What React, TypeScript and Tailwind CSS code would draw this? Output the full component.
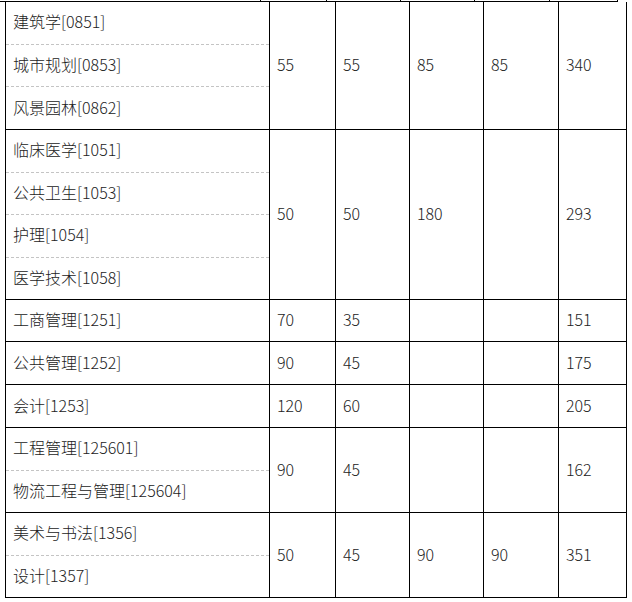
import React from "react";

type Group = {
  h: string;
  names: string[];
  vals: string[];
};

const groups: Group[] = [
  { h: "h-[128px]", names: ["建筑学[0851]", "城市规划[0853]", "风景园林[0862]"], vals: ["55", "55", "85", "85", "340"] },
  { h: "h-[170px]", names: ["临床医学[1051]", "公共卫生[1053]", "护理[1054]", "医学技术[1058]"], vals: ["50", "50", "180", "", "293"] },
  { h: "h-[42px]", names: ["工商管理[1251]"], vals: ["70", "35", "", "", "151"] },
  { h: "h-[43px]", names: ["公共管理[1252]"], vals: ["90", "45", "", "", "175"] },
  { h: "h-[43px]", names: ["会计[1253]"], vals: ["120", "60", "", "", "205"] },
  { h: "h-[85px]", names: ["工程管理[125601]", "物流工程与管理[125604]"], vals: ["90", "45", "", "", "162"] },
  { h: "h-[85px]", names: ["美术与书法[1356]", "设计[1357]"], vals: ["50", "45", "90", "90", "351"] },
];

const valWidths = ["w-[66px]", "w-[74px]", "w-[74px]", "w-[75px]", "w-[68px]"];
const tickWidths = ["w-[261px]", "w-[66px]", "w-[74px]", "w-[74px]", "w-[75px]", "w-[68px]"];

export default function App() {
  return (
    <div
      className="w-[632px] h-[602px] bg-white text-[16px] font-light text-[#222] overflow-hidden"
      style={{ fontFamily: '"Noto Sans CJK SC", "Noto Sans", sans-serif' }}
    >
      {/* bottom edge of the row above, cut off */}
      <div className="flex w-[618px] h-[2px] border-b border-black">
        {tickWidths.map((w, i) => (
          <div key={i} className={`${w} h-[1px] border-r border-black`} />
        ))}
      </div>

      <div className="ml-[5px] w-[622px] border-l border-black">
        {groups.map((g, gi) => (
          <div key={gi} className={`flex ${g.h} border-b border-black`}>
            <div className="w-[264px] flex flex-col border-r border-black">
              {g.names.map((n, ni) => (
                <div
                  key={ni}
                  className={`flex-1 flex items-center pl-[7px] pb-[3px] leading-none ${
                    ni < g.names.length - 1 ? "border-b border-dashed border-[#c4c4c4]" : ""
                  }`}
                >
                  {n}
                </div>
              ))}
            </div>
            {g.vals.map((v, vi) => (
              <div
                key={vi}
                className={`${valWidths[vi]} flex items-center pl-[7px] pb-[3px] border-r border-black leading-none`}
              >
                {v}
              </div>
            ))}
          </div>
        ))}
      </div>
    </div>
  );
}
